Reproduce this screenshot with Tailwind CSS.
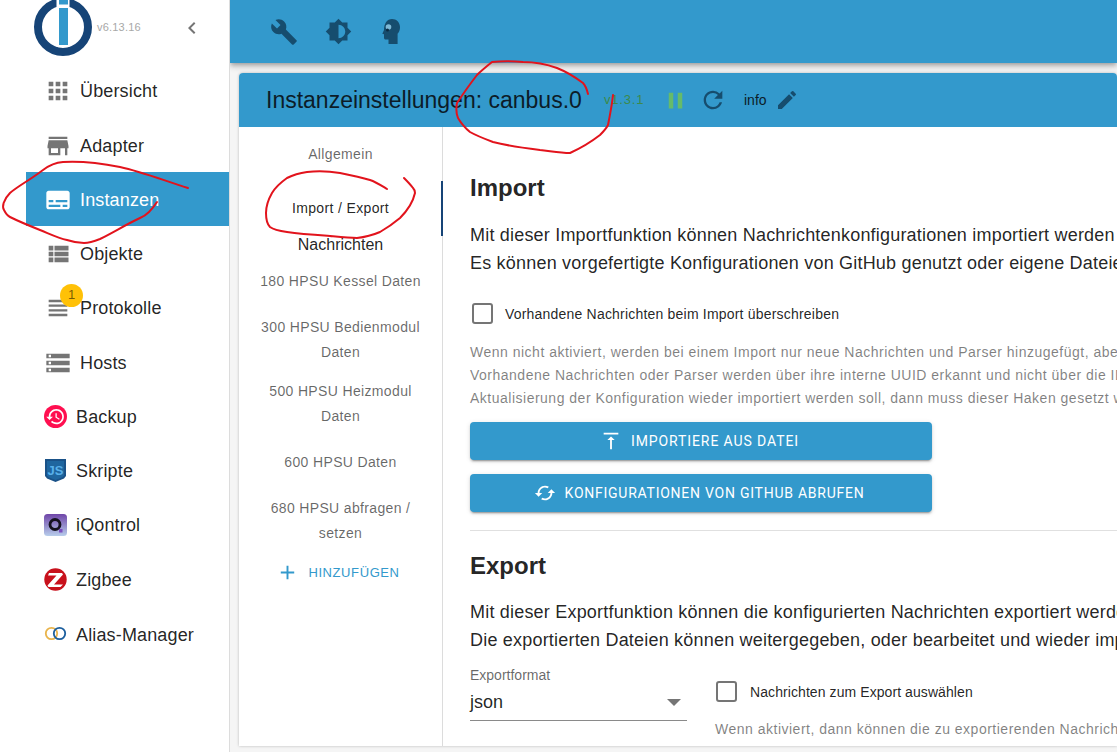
<!DOCTYPE html>
<html lang="de">
<head>
<meta charset="utf-8">
<title>Instanzeinstellungen</title>
<script src="https://cdn.jsdelivr.net/npm/@tailwindcss/browser@4"></script>
</head>
<body class="m-0 bg-[#f5f5f5]">
<div class="relative flex h-[752px] w-[1117px] overflow-hidden bg-[#f5f5f5] font-['Liberation_Sans',Arial,sans-serif] text-black/87">

  <!-- Sidebar -->
  <aside class="h-full w-[230px] shrink-0 border-r border-[#dcdcdc] bg-white">
    <div class="relative flex h-[63px] items-center overflow-hidden">
      <svg class="absolute left-[33px] top-[-3px] h-[60px] w-[60px]" viewBox="0 0 60 60">
        <circle cx="30" cy="30" r="25" fill="none" stroke="#164477" stroke-width="8"/>
        <rect x="23.5" y="0" width="13" height="50" fill="#fff"/>
        <rect x="26" y="0" width="9" height="7.5" fill="#3399cc"/>
        <rect x="26" y="11" width="9" height="37" fill="#3399cc"/>
      </svg>
      <span class="absolute left-[97px] top-[21px] text-[11px] leading-[13px] tracking-[0.2px] text-[#a8a8a8]">v6.13.16</span>
      <svg class="absolute left-[180px] top-[16px] h-6 w-6" viewBox="0 0 24 24" fill="#757575"><path d="M15.41 7.41 14 6l-6 6 6 6 1.41-1.41L10.83 12z"/></svg>
    </div>
    <nav class="ml-[26px] flex flex-col text-[18px] leading-[24px] tracking-[0.15px]">
      <a class="flex h-[54.4px] items-center gap-[8px] pl-[18px] pt-[1px]">
        <svg class="h-7 w-7" viewBox="0 0 24 24" fill="#757575"><path d="M4 8h4V4H4v4zm6 12h4v-4h-4v4zm-6 0h4v-4H4v4zm0-6h4v-4H4v4zm6 0h4v-4h-4v4zm6-10v4h4V4h-4zm-6 4h4V4h-4v4zm6 6h4v-4h-4v4zm0 6h4v-4h-4v4z"/></svg>
        <span>Übersicht</span>
      </a>
      <a class="flex h-[54.4px] items-center gap-[8px] pl-[18px] pt-[2px]">
        <svg class="h-7 w-7" viewBox="0 0 24 24" fill="#757575"><path d="M20 4H4v2h16V4zm1 10v-2l-1-5H4l-1 5v2h1v6h10v-6h4v6h2v-6h1zm-9 4H6v-4h6v4z"/></svg>
        <span>Adapter</span>
      </a>
      <a class="flex h-[54.4px] items-center gap-[8px] bg-[#3399cc] pl-[18px] pt-[2px] text-white">
        <svg class="h-7 w-7" viewBox="0 0 24 24" fill="#fff"><path d="M20 4H4c-1.1 0-2 .9-2 2v12c0 1.1.9 2 2 2h16c1.1 0 2-.9 2-2V6c0-1.1-.9-2-2-2zM4 12h4v2H4v-2zm10 6H4v-2h10v2zm6 0h-4v-2h4v2zm0-4H10v-2h10v2z"/></svg>
        <span>Instanzen</span>
      </a>
      <a class="flex h-[54.4px] items-center gap-[8px] pl-[18px] pt-[1px]">
        <svg class="h-7 w-7" viewBox="0 0 24 24" fill="#757575"><path d="M4 14h4v-4H4v4zm0 5h4v-4H4v4zM4 9h4V5H4v4zm5 5h12v-4H9v4zm0 5h12v-4H9v4zM9 5v4h12V5H9z"/></svg>
        <span>Objekte</span>
      </a>
      <a class="relative flex h-[54.4px] items-center gap-[8px] pl-[18px] pt-[1px]">
        <svg class="h-7 w-7" viewBox="0 0 24 24" fill="#757575"><path d="M4 15h16v-2H4v2zm0 4h16v-2H4v2zm0-8h16V9H4v2zm0-6v2h16V5H4z"/></svg>
        <span>Protokolle</span>
        <span class="absolute left-[34px] top-[3px] flex h-[23px] w-[23px] items-center justify-center rounded-full bg-[#ffc107] text-[13px] tracking-normal text-black/55">1</span>
      </a>
      <a class="flex h-[54.4px] items-center gap-[8px] pl-[18px] pt-[1px]">
        <svg class="h-7 w-7" viewBox="0 0 24 24" fill="#757575"><path d="M2 20h20v-4H2v4zm2-3h2v2H4v-2zM2 4v4h20V4H2zm4 3H4V5h2v2zm-4 7h20v-4H2v4zm2-3h2v2H4v-2z"/></svg>
        <span>Hosts</span>
      </a>
      <a class="flex h-[54.4px] items-center gap-[9px] pl-[18px]">
        <svg class="h-[23px] w-[23px]" viewBox="0 0 23 23">
          <circle cx="11.5" cy="11.5" r="11.5" fill="#ff0f50"/>
          <path transform="translate(1.4 1.6) scale(.84)" fill="#fff" d="M13 3c-4.97 0-9 4.03-9 9H1l3.89 3.89.07.14L9 12H6c0-3.87 3.13-7 7-7s7 3.13 7 7-3.13 7-7 7c-1.93 0-3.68-.79-4.94-2.06l-1.42 1.42C8.27 19.99 10.51 21 13 21c4.97 0 9-4.03 9-9s-4.03-9-9-9zm-1 5v5l4.28 2.54.72-1.21-3.5-2.08V8H12z"/>
        </svg>
        <span>Backup</span>
      </a>
      <a class="flex h-[54.4px] items-center gap-[9px] pl-[18px] pt-[1px]">
        <svg class="h-[23px] w-[23px] -translate-y-[1px]" viewBox="0 0 23 23">
          <path d="M1 0h21v17l-2 2.500-8.500 3.500L3 19.500 1 17z" fill="#1a5288"/>
          <path d="M3 2h17v14.500l-1.500 1.700-7 2.800-7-2.800L3 16.500z" fill="#1f669f"/>
          <text x="11.5" y="15.500" text-anchor="middle" font-family="Liberation Sans" font-weight="700" font-size="13" fill="#58b0ea">JS</text>
        </svg>
        <span>Skripte</span>
      </a>
      <a class="flex h-[54.4px] items-center gap-[9px] pl-[18px]">
        <svg class="h-[23px] w-[23px]" viewBox="0 0 23 23">
          <defs><linearGradient id="iq" x1="0" y1="0" x2="0" y2="1"><stop offset="0" stop-color="#6f45a8"/><stop offset="1" stop-color="#b7cdeb"/></linearGradient></defs>
          <rect width="23" height="22" rx="3.5" fill="url(#iq)"/>
          <circle cx="11" cy="10.5" r="5" fill="none" stroke="#15121f" stroke-width="2.8"/>
          <rect x="15" y="15" width="3.5" height="3.5" fill="#7b4fc0"/>
        </svg>
        <span>iQontrol</span>
      </a>
      <a class="flex h-[54.4px] items-center gap-[9px] pl-[18px]">
        <svg class="h-[23px] w-[23px]" viewBox="0 0 23 23">
          <circle cx="11.5" cy="11.5" r="11.2" fill="#c8111c"/>
          <path d="M5 5h13l1 1.500L10 16.500H19L16.500 19H4.500l-1-1.500L12.500 7.500H4z" fill="#fff"/>
        </svg>
        <span>Zigbee</span>
      </a>
      <a class="flex h-[54.4px] items-center gap-[9px] pl-[18px] pt-[1px]">
        <svg class="h-[23px] w-[23px] -translate-y-[1px]" viewBox="0 0 23 23">
          <circle cx="7.500" cy="11.500" r="5.700" fill="none" stroke="#e9b44c" stroke-width="1.800"/>
          <circle cx="15.500" cy="11.500" r="5.700" fill="none" stroke="#1c5f9e" stroke-width="1.800"/>
        </svg>
        <span>Alias-Manager</span>
      </a>
    </nav>
  </aside>

  <!-- Main -->
  <main class="flex h-full min-w-0 flex-1 flex-col overflow-hidden">
    <header class="relative z-10 flex h-[63px] shrink-0 items-center bg-[#3399cc] pl-[40px] shadow-[0_2px_4px_-1px_rgba(0,0,0,.2),0_4px_5px_0_rgba(0,0,0,.14),0_1px_10px_0_rgba(0,0,0,.12)]">
      <svg class="h-7 w-7" viewBox="0 0 24 24" fill="#164d6e"><path d="M22.7 19l-9.1-9.1c.9-2.3.4-5-1.5-6.9-2-2-5-2.4-7.4-1.3L9 6 6 9 1.6 4.7C.4 7.1.9 10.1 2.9 12.1c1.9 1.9 4.6 2.4 6.9 1.5l9.1 9.1c.4.4 1 .4 1.4 0l2.3-2.3c.5-.4.5-1.1.1-1.4z"/></svg>
      <svg class="ml-[27px] h-[27px] w-[27px]" viewBox="0 0 24 24" fill="#164d6e"><path d="M20 15.31L23.31 12 20 8.69V4h-4.69L12 .69 8.69 4H4v4.69L.69 12 4 15.31V20h4.69L12 23.31 15.31 20H20v-4.69zM12 18V6c3.31 0 6 2.69 6 6s-2.69 6-6 6z"/></svg>
      <svg class="ml-[30px] h-[25px] w-[18px]" viewBox="0 0 18 25" fill="#164d6e">
        <path d="M10 0c4.500 0 8 3.500 8 8.200 0 3-1 5-2.400 6.600V25H6.500v-4.500H3.800c-1.200 0-1.800-.8-1.800-1.800v-3.500L.3 14.800 2 11C2 4.500 5 0 10 0z"/>
        <circle cx="6.500" cy="8" r="2.800" fill="#7fb9d6"/>
        <circle cx="5.500" cy="11" r="1.500" fill="#0b2a40"/>
      </svg>
    </header>

    <section class="ml-[9px] mt-[10px] flex h-[673px] shrink-0 flex-col overflow-hidden rounded-t-[4px] bg-white shadow-[0_0_3px_rgba(0,0,0,.25)]">
      <div class="flex h-[54px] shrink-0 items-center bg-[#3399cc] pl-[27px]">
        <h1 class="w-[338px] shrink-0 text-[23px] font-normal leading-[28px] text-[#0c1c28]">Instanzeinstellungen: canbus.0</h1>
        <span class="w-[58px] shrink-0 text-[13px] tracking-[0.8px] text-[#3d8a4a]">v1.3.1</span>
        <svg class="mr-[10px] h-[27px] w-[27px] shrink-0" viewBox="0 0 24 24" fill="#66bb6a"><path d="M6 19h4V5H6v14zm8-14v14h4V5h-4z"/></svg>
        <svg class="mr-[17px] h-7 w-7 shrink-0" viewBox="0 0 24 24" fill="#164d6e"><path d="M17.65 6.35A7.958 7.958 0 0 0 12 4c-4.42 0-7.99 3.58-7.99 8s3.57 8 7.990 8c3.730 0 6.840-2.550 7.730-6h-2.080A5.990 5.990 0 0 1 12 18c-3.310 0-6-2.690-6-6s2.690-6 6-6c1.660 0 3.140.690 4.220 1.780L13 11h7V4l-2.350 2.350z"/></svg>
        <span class="mr-[5px] w-[26px] shrink-0 text-[14px] text-[#0c1c28]">info</span>
        <svg class="h-6 w-6 shrink-0" viewBox="0 0 24 24" fill="#164d6e"><path d="M3 17.250V21h3.750L17.810 9.940l-3.750-3.750L3 17.250zM20.710 7.040a.996.996 0 0 0 0-1.410l-2.340-2.340a.996.996 0 0 0-1.410 0l-1.830 1.830 3.750 3.750 1.830-1.830z"/></svg>
      </div>

      <div class="flex min-h-0 flex-1">
        <!-- Tabs -->
        <div class="relative flex w-[204px] shrink-0 flex-col border-r border-[#dcdcdc] text-center text-[14px] leading-[25px] tracking-[0.35px] text-black/60">
          <div class="flex h-[54px] items-center justify-center px-[20px]">Allgemein</div>
          <div class="relative flex h-[54px] items-center justify-center px-[20px] text-black/87">
            Import / Export
            <span class="absolute right-[-1px] top-0 h-[55px] w-[2px] bg-[#164477]"></span>
          </div>
          <div class="flex h-[19.5px] items-center justify-center text-[16px] tracking-normal text-black/87">Nachrichten</div>
          <div class="flex h-[53px] items-center justify-center px-[18px]">180 HPSU Kessel Daten</div>
          <div class="flex h-[64px] items-center justify-center px-[18px]">300 HPSU Bedienmodul Daten</div>
          <div class="flex h-[64px] items-center justify-center px-[18px]">500 HPSU Heizmodul Daten</div>
          <div class="flex h-[53px] items-center justify-center px-[18px]">600 HPSU Daten</div>
          <div class="flex h-[64px] items-center justify-center px-[18px]">680 HPSU abfragen / setzen</div>
          <div class="mt-[1.500px] flex h-[36px] items-center justify-center gap-[9px] pr-[5px] text-[13px] uppercase tracking-[0.6px] text-[#3399cc]">
            <svg class="h-[23px] w-[23px]" viewBox="0 0 24 24" fill="#3399cc"><path d="M19 13h-6v6h-2v-6H5v-2h6V5h2v6h6v2z"/></svg>
            <span>Hinzufügen</span>
          </div>
        </div>

        <!-- Content -->
        <div class="min-w-0 flex-1 overflow-hidden pl-[27px] whitespace-nowrap">
          <h2 class="mt-[47px] text-[24px] font-bold leading-[28px]">Import</h2>
          <p class="mt-[19px] text-[18px] leading-[28px] tracking-[0.2px]">Mit dieser Importfunktion können Nachrichtenkonfigurationen importiert werden<br>Es können vorgefertigte Konfigurationen von GitHub genutzt oder eigene Dateien hochgeladen werden.</p>
          <label class="mt-[26px] flex h-[21px] items-center">
            <span class="ml-[2px] h-[21px] w-[21px] shrink-0 rounded-[3px] border-2 border-[#757575] bg-white"></span>
            <span class="ml-[12px] text-[14px] leading-[20px] tracking-[0.2px]">Vorhandene Nachrichten beim Import überschreiben</span>
          </label>
          <p class="mt-[17px] text-[14px] leading-[23px] tracking-[0.5px] text-black/50">Wenn nicht aktiviert, werden bei einem Import nur neue Nachrichten und Parser hinzugefügt, aber keine bestehenden geändert.<br>Vorhandene Nachrichten oder Parser werden über ihre interne UUID erkannt und nicht über die ID.<br>Aktualisierung der Konfiguration wieder importiert werden soll, dann muss dieser Haken gesetzt werden.</p>
          <button class="mt-[12px] flex h-[38px] w-[462px] items-center justify-center gap-[9px] rounded-[4px] bg-[#3399cc] pr-[3px] font-['Roboto',sans-serif] text-[14px] uppercase tracking-[0.9px] text-white shadow-[0_3px_1px_-2px_rgba(0,0,0,.2),0_2px_2px_0_rgba(0,0,0,.14),0_1px_5px_0_rgba(0,0,0,.12)]">
            <svg class="h-[22px] w-[22px]" viewBox="0 0 24 24" fill="#fff"><path d="M8 11h3v10h2V11h3l-4-4-4 4zM4 3v2h16V3H4z"/></svg>
            <span>Importiere aus Datei</span>
          </button>
          <button class="mt-[14px] flex h-[38px] w-[462px] items-center justify-center gap-[9px] rounded-[4px] bg-[#3399cc] pr-[4px] font-['Roboto',sans-serif] text-[14px] uppercase tracking-[0.75px] text-white shadow-[0_3px_1px_-2px_rgba(0,0,0,.2),0_2px_2px_0_rgba(0,0,0,.14),0_1px_5px_0_rgba(0,0,0,.12)]">
            <svg class="h-[22px] w-[22px]" viewBox="0 0 24 24" fill="#fff"><path d="M19 8l-4 4h3c0 3.310-2.690 6-6 6-1.010 0-1.970-.250-2.800-.700l-1.460 1.460C8.970 19.540 10.430 20 12 20c4.420 0 8-3.580 8-8h3l-4-4zM6 12c0-3.310 2.690-6 6-6 1.010 0 1.970.250 2.800.700l1.460-1.460C15.030 4.460 13.570 4 12 4c-4.420 0-8 3.580-8 8H1l4 4 4-4H6z"/></svg>
            <span>Konfigurationen von GitHub abrufen</span>
          </button>
          <hr class="mt-[18px] border-0 border-t border-[#e0e0e0]">
          <h2 class="mt-[21px] text-[24px] font-bold leading-[28px]">Export</h2>
          <p class="mt-[18px] text-[18px] leading-[28px] tracking-[0.2px]">Mit dieser Exportfunktion können die konfigurierten Nachrichten exportiert werden.<br>Die exportierten Dateien können weitergegeben, oder bearbeitet und wieder importiert werden.</p>
          <div class="mt-[11px] flex">
            <div class="w-[217px] shrink-0">
              <div class="text-[14px] leading-[20px] text-black/60">Exportformat</div>
              <div class="relative mt-[3px] h-[33px] border-b border-[#8a8a8a] text-[18px] leading-[28px]">
                json
                <span class="absolute right-[6px] top-[11px] h-0 w-0 border-x-[7px] border-t-[7px] border-x-transparent border-t-[#757575]"></span>
              </div>
            </div>
            <div class="ml-[28px] min-w-0">
              <label class="mt-[16px] flex h-[21px] items-center">
                <span class="ml-[1px] h-[21px] w-[21px] shrink-0 rounded-[3px] border-2 border-[#757575] bg-white"></span>
                <span class="ml-[13px] text-[14px] leading-[20px] tracking-[0.08px]">Nachrichten zum Export auswählen</span>
              </label>
              <p class="mt-[16px] text-[14px] leading-[23px] tracking-[0.5px] text-black/50">Wenn aktiviert, dann können die zu exportierenden Nachrichten ausgewählt werden.</p>
            </div>
          </div>
        </div>
      </div>
    </section>
  </main>

  <!-- Red hand-drawn annotations -->
  <svg class="pointer-events-none absolute left-0 top-0 z-20 h-[752px] w-[1117px]" viewBox="0 0 1117 752" fill="none" stroke="#e2131c" stroke-width="2" stroke-linecap="round" stroke-linejoin="round">
    <path d="M188 188C165 181 143 172 120 167C100 163 80 161 63 162C52 163 47 167 43 170C30 180 18 186 10 193C3 200 2 207 4 210C6 214 8 216 10 217C20 222 30 226 40 230C50 234 58 238 67 240C73 242 78 243 84 243C90 243 95 241 100 239C114 232 127 224 140 218C145 216 147 214 149 212C152 209 155 205 157 202"/>
    <path d="M387 189C382 186 376 182 370 180C360 177 350 175 340 173C328 171 316 171 307 172C300 173 293 175 287 178C280 183 275 188 272 193C268 200 266 207 266 213C266 220 267 224 270 227C274 230 280 231 287 232C301 234 316 235 330 236C340 237 349 238 357 238C366 237 373 235 380 232C387 228 394 223 400 218C407 211 413 202 415 193C415 191 414 189 413 188C410 184 407 181 404 178"/>
    <path d="M588 94C587 90 586 86 583 83C575 77 567 72 557 68C546 64 535 62 523 62C512 61 502 61 492 62C487 66 482 70 477 75C470 84 463 94 457 103C456 108 456 113 458 118C461 123 465 128 470 132C477 136 485 139 493 142C508 146 524 148 540 150C550 151 560 153 570 153C581 148 591 142 600 135C603 132 606 129 608 125C610 115 612 105 613 95"/>
  </svg>
</div>
</body>
</html>
